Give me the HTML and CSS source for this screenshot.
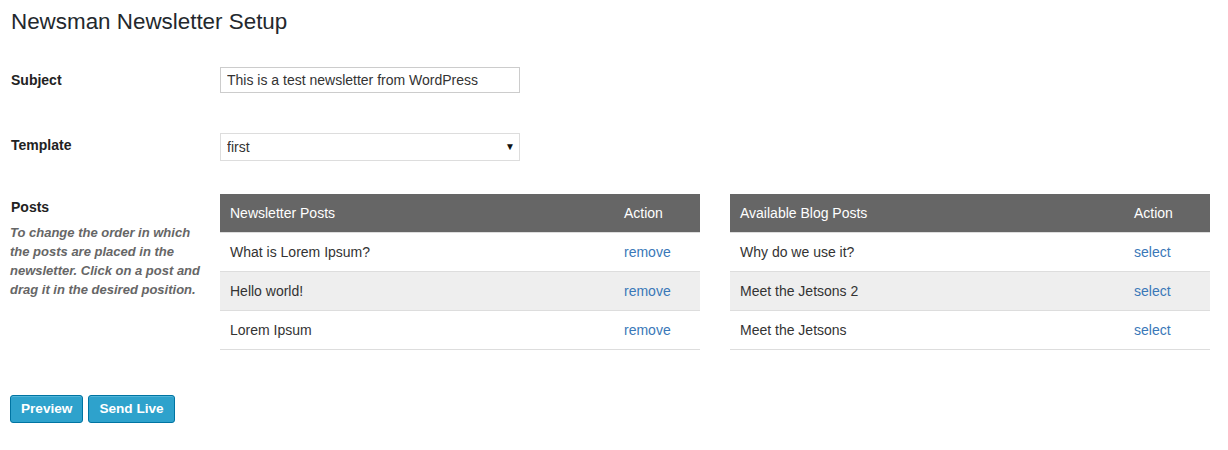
FILE: index.html
```html
<!DOCTYPE html>
<html>
<head>
<meta charset="utf-8">
<title>Newsman Newsletter Setup</title>
<link rel="stylesheet" href="styles.css">
</head>
<body>
<div class="wrap">
  <h1 class="title">Newsman Newsletter Setup</h1>

  <div class="row row-subject">
    <div class="label">Subject</div>
    <div class="field"><input class="text-input" type="text" value="This is a test newsletter from WordPress"></div>
  </div>

  <div class="row row-template">
    <div class="label">Template</div>
    <div class="field">
      <div class="select-wrap">
        <select class="select-input"><option>first</option></select>
        <span class="select-arrow">&#9660;</span>
      </div>
    </div>
  </div>

  <div class="row row-posts">
    <div class="label-block">
      <div class="label">Posts</div>
      <p class="desc">To change the order in which the posts are placed in the newsletter. Click on a post and drag it in the desired position.</p>
    </div>
    <div class="tables">
      <table class="posts">
        <thead><tr><th>Newsletter Posts</th><th class="act">Action</th></tr></thead>
        <tbody>
          <tr><td>What is Lorem Ipsum?</td><td class="act"><a href="#">remove</a></td></tr>
          <tr class="alt"><td>Hello world!</td><td class="act"><a href="#">remove</a></td></tr>
          <tr><td>Lorem Ipsum</td><td class="act"><a href="#">remove</a></td></tr>
        </tbody>
      </table>
      <table class="posts">
        <thead><tr><th>Available Blog Posts</th><th class="act">Action</th></tr></thead>
        <tbody>
          <tr><td>Why do we use it?</td><td class="act"><a href="#">select</a></td></tr>
          <tr class="alt"><td>Meet the Jetsons 2</td><td class="act"><a href="#">select</a></td></tr>
          <tr><td>Meet the Jetsons</td><td class="act"><a href="#">select</a></td></tr>
        </tbody>
      </table>
    </div>
  </div>

  <div class="buttons">
    <button class="btn">Preview</button>
    <button class="btn">Send Live</button>
  </div>
</div>
</body>
</html>
```

FILE: styles.css
```css
* { box-sizing: border-box; }
body {
  margin: 0;
  background: #fff;
  font-family: "Liberation Sans", Arial, sans-serif;
  color: #333;
  font-size: 14px;
}
.wrap {
  padding: 0 10px;
}
.title {
  margin: 7px 0 0 1px;
  font-size: 22.4px;
  font-weight: 400;
  line-height: 29px;
  color: #23282d;
}
.row {
  display: flex;
  align-items: center;
}
.row-subject { margin-top: 31px; }
.row-template { margin-top: 40px; }
.row-posts { margin-top: 33px; align-items: flex-start; }
.label {
  width: 210px;
  flex: none;
  padding-left: 1px;
  font-size: 14px;
  font-weight: bold;
  color: #222;
  line-height: 19px;
}
.row-template .label { margin-top: -4px; }
.label-block {
  width: 210px;
  flex: none;
  padding-top: 4px;
  padding-right: 10px;
}
.label-block .label { width: auto; }
.desc {
  margin: 6px 0 0;
  font-size: 13px;
  font-style: italic;
  font-weight: bold;
  line-height: 19px;
  color: #666;
}
.text-input {
  display: block;
  width: 300px;
  height: 26px;
  margin: 0;
  padding: 0 6px;
  border: 1px solid #ccc;
  font-family: "Liberation Sans", Arial, sans-serif;
  font-size: 14px;
  color: #333;
  outline: none;
}
.select-wrap {
  position: relative;
  width: 300px;
}
.select-input {
  display: block;
  width: 300px;
  height: 28px;
  margin: 0;
  padding: 0 6px;
  border: 1px solid #ddd;
  background: #fff;
  font-family: "Liberation Sans", Arial, sans-serif;
  font-size: 14px;
  color: #333;
  -webkit-appearance: none;
  appearance: none;
  border-radius: 0;
}
.select-arrow {
  position: absolute;
  right: 5px;
  top: 8px;
  font-size: 10px;
  line-height: 12px;
  color: #111;
  pointer-events: none;
}
.tables {
  display: flex;
  gap: 30px;
}
.posts {
  width: 480px;
  border-collapse: collapse;
  font-size: 14px;
}
.posts th, .posts td {
  padding: 0 10px;
  text-align: left;
  border-bottom: 1px solid #ddd;
  vertical-align: middle;
}
.posts th {
  height: 38px;
  background: #666;
  color: #fff;
  font-weight: normal;
}
.posts td {
  height: 39px;
  color: #333;
}
.posts .act { width: 86px; }
.posts tr.alt td { background: #eee; }
.posts a {
  color: #3a78b8;
  text-decoration: none;
}
.buttons {
  display: flex;
  gap: 5px;
  margin-top: 45px;
}
.btn {
  height: 28px;
  padding: 0 10px;
  margin: 0;
  border: 1px solid #0074a2;
  border-radius: 3px;
  background: #2ea2cc;
  color: #fff;
  font-family: "Liberation Sans", Arial, sans-serif;
  font-size: 13.6px;
  font-weight: bold;
  line-height: 26px;
  box-shadow: inset 0 1px 0 rgba(120, 200, 230, 0.5);
  cursor: pointer;
}
```
